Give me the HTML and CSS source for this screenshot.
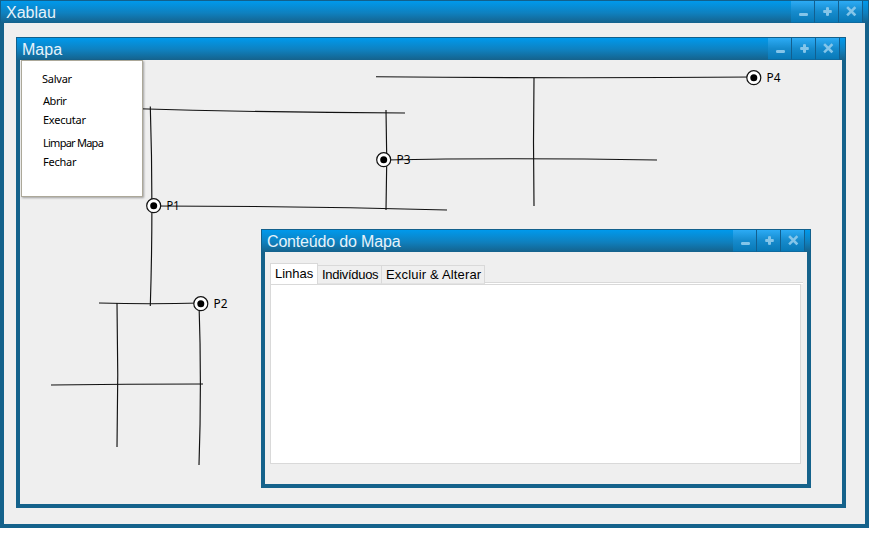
FILE: index.html
```
<!DOCTYPE html>
<html lang="pt-BR">
<head>
<meta charset="utf-8">
<title>Xablau</title>
<link rel="stylesheet" href="styles.css">
</head>
<body>
<svg width="0" height="0" class="defs">
  <symbol id="min" viewBox="0 0 24 22"><rect x="8" y="12" width="9" height="3" rx="1.2"/></symbol>
  <symbol id="max" viewBox="0 0 24 22"><path d="M11 6.500q1.500-.8 3 0v2.500h2.500q.8 1.500 0 3H14v2.500q-1.500.8-3 0V12H8.500q-.8-1.500 0-3H11z"/></symbol>
  <symbol id="close" viewBox="0 0 24 22"><path d="M9 7l6.500 6.500M15.500 7L9 13.500" fill="none" stroke="#84c5e9" stroke-width="2.500" stroke-linecap="square"/></symbol>
</svg>
<main class="window app">
  <header class="titlebar"><h1>Xablau</h1><div class="controls"><button><svg><use href="#min"/></svg></button><button><svg><use href="#max"/></svg></button><button><svg><use href="#close"/></svg></button></div></header>
  <div class="client"></div>
</main>
<section class="window map">
  <header class="titlebar"><h1>Mapa</h1><div class="controls"><button><svg><use href="#min"/></svg></button><button><svg><use href="#max"/></svg></button><button><svg><use href="#close"/></svg></button></div></header>
  <div class="client">
    <svg class="streets" width="822" height="444" viewBox="20 60 822 444">
      <g class="lines">
        <path d="M130 108.500Q265 112.500 405 113"/>
        <path d="M150.300 106.500Q153.500 205 150.300 306"/>
        <path d="M154 206Q300 206 447 210"/>
        <path d="M386 110Q387.500 160 386 210"/>
        <path d="M384 160Q510 157.500 657 160"/>
        <path d="M376 76.800Q565 78.500 754 77"/>
        <path d="M534 78Q533 142 534 206"/>
        <path d="M99 303Q150 304.500 201 303"/>
        <path d="M117 303Q118.500 375 117 447"/>
        <path d="M199 303Q201.800 384 199 465"/>
        <path d="M51 385Q127 384 203 384"/>
      </g>
      <g class="nodes">
        <circle cx="153.700" cy="205.700" r="7"/><circle class="dot" cx="153.700" cy="205.700" r="3.500"/>
        <circle cx="200.800" cy="303.700" r="7"/><circle class="dot" cx="200.800" cy="303.700" r="3.500"/>
        <circle cx="383.700" cy="159.700" r="7"/><circle class="dot" cx="383.700" cy="159.700" r="3.500"/>
        <circle cx="753.800" cy="77.700" r="7"/><circle class="dot" cx="753.800" cy="77.700" r="3.500"/>
      </g>
      <g class="labels">
        <text x="166.500" y="210" textLength="13" lengthAdjust="spacingAndGlyphs">P1</text>
        <text x="213.500" y="308" textLength="14" lengthAdjust="spacingAndGlyphs">P2</text>
        <text x="396.500" y="164" textLength="14" lengthAdjust="spacingAndGlyphs">P3</text>
        <text x="766.500" y="82" textLength="14" lengthAdjust="spacingAndGlyphs">P4</text>
      </g>
    </svg>
    <nav class="menu">
      <a class="save">Salvar</a><a class="open">Abrir</a><a class="run">Executar</a><a class="clear">Limpar Mapa</a><a class="quit">Fechar</a>
    </nav>
  </div>
</section>
<section class="window content">
  <header class="titlebar"><h1>Conteúdo do Mapa</h1><div class="controls"><button><svg><use href="#min"/></svg></button><button><svg><use href="#max"/></svg></button><button><svg><use href="#close"/></svg></button></div></header>
  <div class="client">
    <div class="tabs"><span class="tab active">Linhas</span><span class="tab individuals">Indivíduos</span><span class="tab edit">Excluir &amp; Alterar</span><i class="rule"></i></div>
    <div class="panel"></div>
  </div>
</section>
</body>
</html>
```
FILE: styles.css
```
* { box-sizing: border-box; }
body { margin: 0; width: 869px; height: 541px; overflow: hidden; background: #fff; font-family: "Liberation Sans", sans-serif; }
.defs { position: absolute; }
.window { position: absolute; display: flex; flex-direction: column; background: #efefef; }
.app { left: 0; top: 0; width: 869px; height: 528px; }
.map { left: 16px; top: 37px; width: 830px; height: 471px; }
.content { left: 261px; top: 229px; width: 550px; height: 259px; }
.titlebar { flex: none; display: flex; justify-content: space-between; height: 23px; padding: 0 5px 0 5px; border: 1px solid #12608c; border-bottom: 0; background: linear-gradient(#0099ec, #0f80be 55%, #15628c); }
.titlebar h1 { margin: 0; font-size: 16px; line-height: 23px; font-weight: 400; color: #e6f3fb; white-space: nowrap; }
.content h1 { letter-spacing: -.17px; }
.controls { display: flex; }
.controls button { width: 24px; height: 22px; padding: 0; border: 0; border-right: 1px solid #125f8f; border-bottom: 1px solid #0e6a9f; background: linear-gradient(#2cabf5, #168bcd 50%, #0879b7); }
.controls svg { display: block; width: 24px; height: 22px; fill: #84c5e9; }
.client { flex: 1; min-height: 0; border: 4px solid #15628b; border-top: 0; }
.map .client { position: relative; }
.streets { display: block; }
.lines { fill: none; stroke: #111; stroke-width: 1.15; }
.nodes circle { fill: #fff; stroke: #111; stroke-width: 1.2; }
.nodes .dot { fill: #000; stroke: none; }
.labels { font: 12px "Noto Sans", sans-serif; fill: #000; }
.menu { position: absolute; left: 1px; top: 0; width: 122px; height: 137px; padding: 8px 0 0 20px; display: flex; flex-direction: column; border: 1px solid #aca899; background: #fff; box-shadow: 1px 1px 2px #0005; font: 11px/19px "Noto Sans", sans-serif; color: #000; }
.menu a { height: 19px; white-space: nowrap; }
.menu .save { letter-spacing: -.25px; }
.menu .open { margin: 3px 0 0 1px; letter-spacing: -.45px; }
.menu .run, .menu .quit { margin-left: 1px; letter-spacing: -.25px; }
.menu .clear { margin: 4px 0 0 1px; letter-spacing: -.75px; }
.content .client { padding: 11px 4px 20px 5px; display: flex; flex-direction: column; }
.tabs { display: flex; align-items: flex-end; height: 21px; flex: none; font-size: 13px; color: #000; }
.tab { height: 19px; padding-left: 3px; border: 1px solid #d9d9d9; border-left: 0; border-bottom: 0; line-height: 18px; white-space: nowrap; }
.tab.active { width: 48px; height: 21px; padding-left: 4px; border-left: 1px solid #d9d9d9; background: #fff; line-height: 19px; }
.tab.individuals { width: 64px; padding-left: 4px; letter-spacing: -.3px; }
.individuals, .edit { border-bottom: 1px solid #e3e3e3; }
.tab.edit { width: 103px; padding-left: 4px; letter-spacing: .17px; }
.rule { flex: 1; height: 2px; border-top: 1px solid #d9d9d9; background: #fff; }
.panel { flex: 1; margin-right: 2px; border: 1px solid #d9d9d9; background: #fff; }
```
